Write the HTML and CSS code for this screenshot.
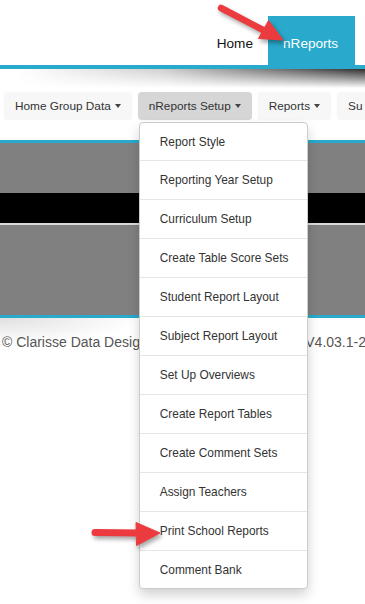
FILE: index.html
```html
<!DOCTYPE html>
<html lang="en">
<head>
    <meta charset="UTF-8">
    <meta name="viewport" content="width=device-width, initial-scale=1.0">
    <title>nReports</title>
    <link rel="stylesheet" href="styles.css">
</head>
<body>
    <header class="topbar">
        <nav class="topnav">
            <a class="topnav-link" href="#">Home</a>
            <a class="topnav-link active" href="#">nReports</a>
        </nav>
    </header>
    <div class="header-shade"></div>
    <div class="menubar">
        <div class="menu-item">
            <button class="menu-btn">Home Group Data <span class="caret"></span></button>
        </div>
        <div class="menu-item">
            <button class="menu-btn active">nReports Setup <span class="caret"></span></button>
            <ul class="dropdown">
                <li>Report Style</li>
                <li>Reporting Year Setup</li>
                <li>Curriculum Setup</li>
                <li>Create Table Score Sets</li>
                <li>Student Report Layout</li>
                <li>Subject Report Layout</li>
                <li>Set Up Overviews</li>
                <li>Create Report Tables</li>
                <li>Create Comment Sets</li>
                <li>Assign Teachers</li>
                <li>Print School Reports</li>
                <li>Comment Bank</li>
            </ul>
        </div>
        <div class="menu-item">
            <button class="menu-btn">Reports <span class="caret"></span></button>
        </div>
        <div class="menu-item">
            <button class="menu-btn">Su</button>
        </div>
    </div>
    <div class="content">
        <div class="panel-top"></div>
        <div class="banner"></div>
        <div class="panel-bottom"></div>
    </div>
    <footer class="footer">
        <span>&copy; Clarisse Data Design</span>
        <span class="version">V4.03.1-2</span>
    </footer>
    <!-- red callout arrows from the screenshot -->
    <svg class="callouts" width="365" height="604" viewBox="0 0 365 604">
        <g fill="#ec3b3f" stroke="#ec3b3f">
            <line x1="221" y1="8" x2="265" y2="31" stroke-width="6.5" stroke-linecap="round"/>
            <polygon points="283,40 258.5,38.5 268.5,20.5" stroke-width="1" stroke-linejoin="round"/>
            <line x1="95" y1="532.5" x2="140" y2="533" stroke-width="7" stroke-linecap="round"/>
            <polygon points="160,533 136,522.5 136.5,545.5" stroke-width="1" stroke-linejoin="round"/>
        </g>
    </svg>
</body>
</html>
```

FILE: styles.css
```css
body {
    margin: 0;
    padding: 0;
    width: 365px;
    height: 604px;
    overflow: hidden;
    position: relative;
    font-family: 'Liberation Sans', Arial, sans-serif;
    background: #fff;
    color: #333;
}
.topbar {
    height: 65px;
    border-bottom: 4px solid #29a9cb;
    display: flex;
    justify-content: flex-end;
    align-items: flex-end;
}
.topnav {
    display: flex;
    margin-right: 10px;
}
.topnav-link {
    display: block;
    height: 49px;
    line-height: 55px;
    padding: 0 15px;
    font-size: 13.6px;
    color: #111;
    text-decoration: none;
}
.topnav-link.active {
    background: #29a9cb;
    color: #fff;
    width: 57px;
}
.header-shade {
    height: 20px;
    background:
        linear-gradient(to bottom, rgba(255, 255, 255, 0), #fff 95%),
        linear-gradient(to right, #fff 5%, #cfcfcf 45%, #2e2e2e);
}
.menubar {
    height: 48px;
    padding: 3px 0 0 4px;
    display: flex;
    gap: 6px;
    white-space: nowrap;
}
.menu-item {
    position: relative;
}
.menu-btn {
    height: 28px;
    padding: 0 11px;
    border: none;
    border-radius: 4px;
    background: #f7f7f7;
    box-shadow: 0 0 2px rgba(0, 0, 0, 0.04);
    font-family: inherit;
    font-size: 11.8px;
    color: #333;
    display: flex;
    align-items: center;
    gap: 4px;
}
.menu-btn.active {
    background: #d6d6d6;
}
.caret {
    width: 0;
    height: 0;
    border-top: 4px solid #444;
    border-left: 3.5px solid transparent;
    border-right: 3.5px solid transparent;
}
.dropdown {
    position: absolute;
    top: 30px;
    left: 1px;
    z-index: 5;
    width: 167px;
    margin: 0;
    padding: 0;
    list-style: none;
    background: #fff;
    border: 1px solid #ccc;
    border-radius: 4px;
    box-shadow: 0 6px 12px rgba(0, 0, 0, 0.18);
}
.dropdown li {
    height: 38px;
    line-height: 38px;
    padding-left: 20px;
    font-size: 11.9px;
    color: #333;
    border-top: 1px solid #e5e5e5;
}
.dropdown li:first-child {
    border-top: none;
    height: 37px;
}
.dropdown li:last-child {
    height: 37px;
}
.content {
    border-top: 3px solid #29a9cb;
    border-bottom: 3px solid #29a9cb;
}
.panel-top {
    height: 50px;
    background: #808080;
}
.banner {
    height: 30px;
    background: #000;
}
.panel-bottom {
    height: 90px;
    background: #808080;
    border-top: 2px solid #d9d9d9;
}
.footer {
    display: flex;
    justify-content: space-between;
    padding: 15px 0 0 2px;
    height: 40px;
    line-height: 18px;
    font-size: 14px;
    color: #555;
    white-space: nowrap;
    background: radial-gradient(ellipse 140px 26px at 0 0, rgba(0, 0, 0, 0.12), rgba(0, 0, 0, 0));
}
.version {
    margin-right: -1px;
}
.callouts {
    position: absolute;
    top: 0;
    left: 0;
    z-index: 10;
    pointer-events: none;
    filter: drop-shadow(2px 3px 2px rgba(0, 0, 0, 0.35));
}
```
